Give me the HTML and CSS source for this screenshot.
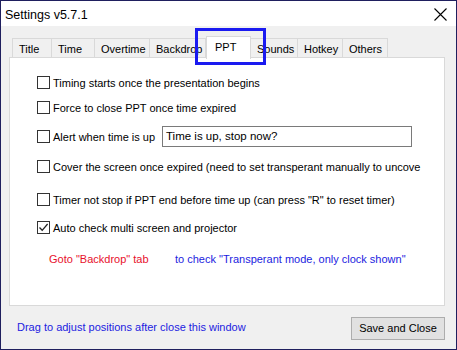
FILE: index.html
```html
<!DOCTYPE html>
<html lang="en">
<head>
  <meta charset="UTF-8" />
  <title>Settings v5.7.1</title>
  <link rel="stylesheet" href="styles.css">
</head>
<body>
  <div class="window">
    <div class="titlebar">
      <span class="title">Settings v5.7.1</span>
      <svg class="close" width="13" height="13" viewBox="0 0 13 13">
        <path d="M0.5 0.5 L12.5 12.5 M12.5 0.5 L0.5 12.5" stroke="#000" stroke-width="1.1" fill="none" />
      </svg>
    </div>

    <div class="content">
      <div class="tabs">
        <div class="tab w-title">Title</div>
        <div class="tab w-time">Time</div>
        <div class="tab w-overtime">Overtime</div>
        <div class="tab w-backdrop">Backdrop</div>
        <div class="tab active w-ppt">PPT</div>
        <div class="tab w-sounds">Sounds</div>
        <div class="tab w-hotkey">Hotkey</div>
        <div class="tab w-others">Others</div>
      </div>

      <div class="panel">
        <div class="row">
          <span class="box"></span>
          <span class="label">Timing starts once the presentation begins</span>
        </div>
        <div class="row gap-a">
          <span class="box"></span>
          <span class="label">Force to close PPT once time expired</span>
        </div>
        <div class="row gap-b">
          <span class="box"></span>
          <span class="label fixed">Alert when time is up</span>
          <div class="input">Time is up, stop now?</div>
        </div>
        <div class="row gap-c">
          <span class="box"></span>
          <span class="label">Cover the screen once expired (need to set transperant manually to uncove</span>
        </div>
        <div class="row gap-d">
          <span class="box"></span>
          <span class="label">Timer not stop if PPT end before time up (can press "R" to reset timer)</span>
        </div>
        <div class="row gap-e">
          <span class="box checked">
            <svg width="11" height="11" viewBox="0 0 11 11">
              <path d="M1.5 5.5 L4.2 8.3 L9.6 2" stroke="#222" stroke-width="1.3" fill="none" />
            </svg>
          </span>
          <span class="label">Auto check multi screen and projector</span>
        </div>
        <div class="note">
          <span class="red">Goto "Backdrop" tab</span>
          <span class="blue">to check "Transperant mode, only clock shown"</span>
        </div>
      </div>

      <div class="footer">
        <span class="hint">Drag to adjust positions after close this window</span>
        <button class="btn">Save and Close</button>
      </div>
    </div>

    <div class="mark"></div>
  </div>
</body>
</html>
```

FILE: styles.css
```css
body {
  margin: 0;
  font-family: "Liberation Sans", Arial, sans-serif;
  font-size: 11px;
  color: #000;
}
.window {
  position: relative;
  width: 455px;
  height: 348px;
  border: 1px solid #1f1f5e;
  background: #f0f0f0;
  overflow: hidden;
}
.titlebar {
  height: 25px;
  background: #fff;
  display: flex;
  align-items: center;
  justify-content: space-between;
  padding: 0 9px 0 4px;
}
.title {
  font-size: 12.5px;
  margin-top: 2px;
}
.close {
  margin-top: 1px;
}
.content {
  padding: 10px 11px 0 8px;
}
.tabs {
  display: flex;
  height: 21px;
  padding-left: 3px;
  align-items: flex-end;
}
.tab {
  height: 19px;
  box-sizing: border-box;
  border: 1px solid #d9d9d9;
  border-bottom: none;
  border-left: none;
  background: #f0f0f0;
  padding: 4px 0 0 6px;
  white-space: nowrap;
  overflow: hidden;
}
.tab:first-child {
  border-left: 1px solid #d9d9d9;
}
.tab.active {
  height: 23px;
  margin-bottom: -2px;
  background: #fff;
  border-left: 1px solid #d9d9d9;
  padding: 4px 0 0 8px;
  position: relative;
  z-index: 1;
}
.w-title { width: 40px; }
.w-time { width: 43px; }
.w-overtime { width: 55px; }
.w-backdrop { width: 56px; }
.w-ppt { width: 45px; }
.w-sounds { width: 47px; }
.w-hotkey { width: 45px; }
.w-others { width: 45px; }

.panel {
  height: 249px;
  box-sizing: border-box;
  background: #fff;
  border: 1px solid #d9d9d9;
  padding: 14px 0 0 27px;
  display: flex;
  flex-direction: column;
}
.row {
  display: flex;
  align-items: center;
  height: 21px;
  white-space: nowrap;
}
.gap-a { margin-top: 4px; }
.gap-b { margin-top: 8px; }
.gap-c { margin-top: 9px; }
.gap-d { margin-top: 12px; }
.gap-e { margin-top: 7px; }
.box {
  width: 13px;
  height: 13px;
  box-sizing: border-box;
  border: 1px solid #333;
  background: #fff;
  margin-right: 3px;
  display: flex;
  align-items: center;
  justify-content: center;
}
.label.fixed {
  width: 109px;
}
.input {
  width: 250px;
  height: 21px;
  box-sizing: border-box;
  border: 1px solid #7a7a7a;
  padding: 3px 0 0 3px;
  font-size: 11.5px;
}
.note {
  margin-top: 10px;
  height: 21px;
  display: flex;
  align-items: center;
  padding-left: 12px;
}
.red {
  color: #e8102c;
  width: 126px;
}
.blue {
  color: #1c1ce0;
}
.footer {
  display: flex;
  justify-content: space-between;
  align-items: center;
  height: 43px;
  padding-left: 8px;
}
.hint {
  color: #1c1ce0;
  margin-top: -1px;
}
.btn {
  width: 94px;
  height: 23px;
  margin-top: 1px;
  background: #e1e1e1;
  border: 1px solid #adadad;
  font-family: "Liberation Sans", Arial, sans-serif;
  font-size: 11px;
  color: #000;
  padding: 0;
}
.mark {
  position: absolute;
  left: 194px;
  top: 27px;
  width: 65px;
  height: 31px;
  border: 3px solid #1a1af0;
}
```
